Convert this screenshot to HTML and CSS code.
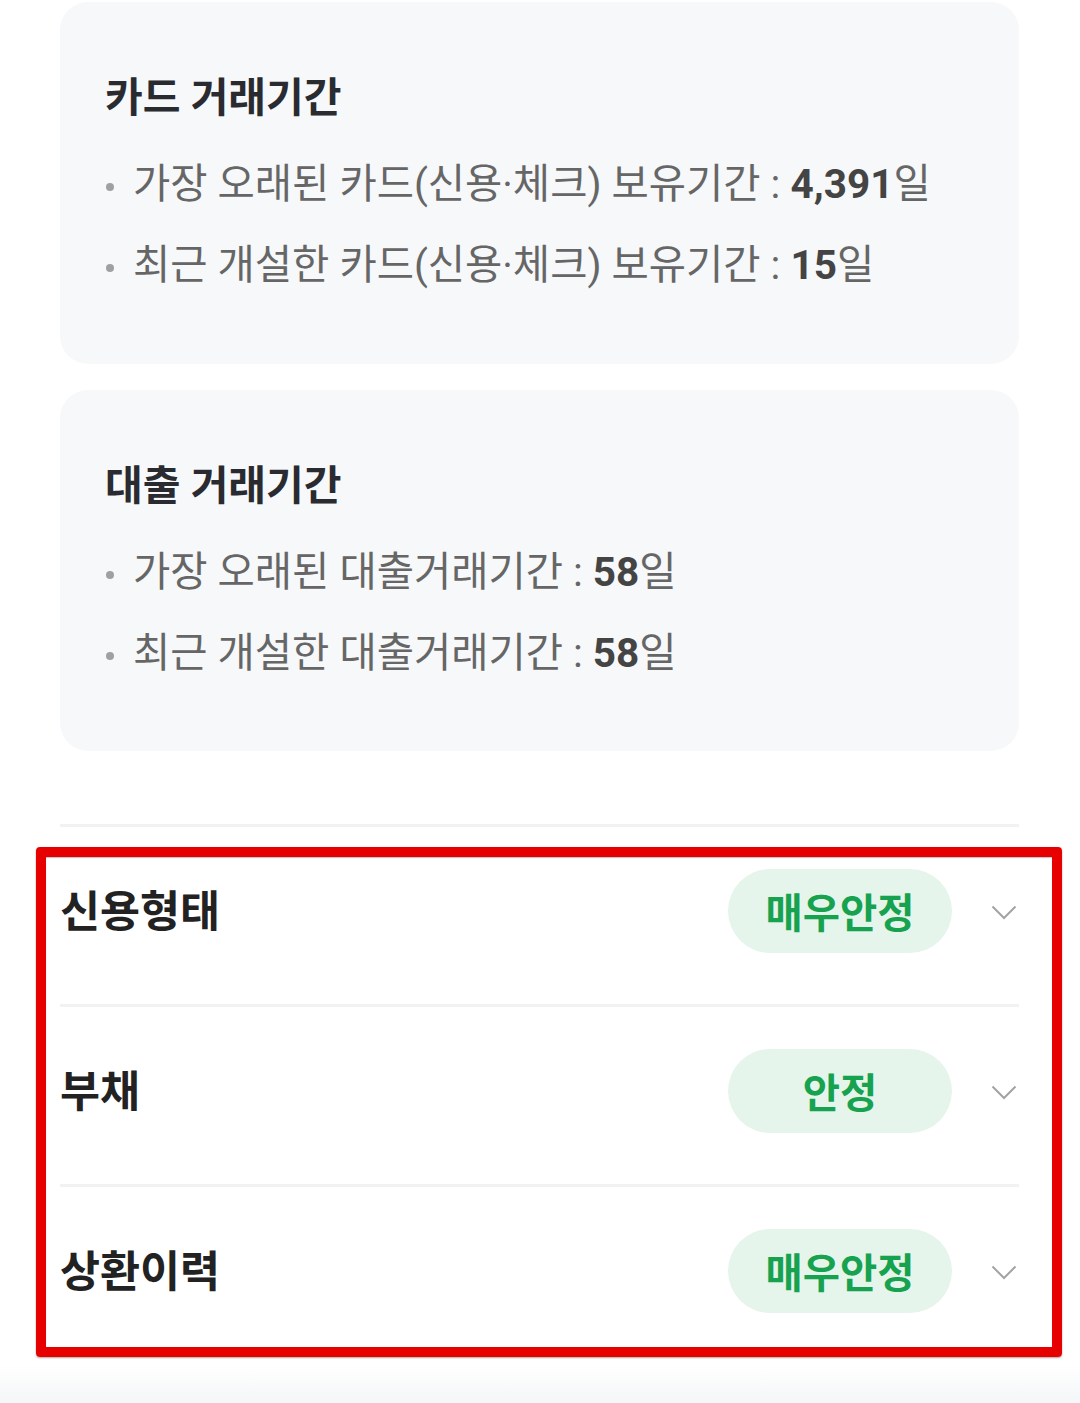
FILE: index.html
```html
<!DOCTYPE html>
<html lang="ko">
<head>
<meta charset="utf-8">
<title>신용 정보</title>
<link rel="stylesheet" href="styles.css">
</head>
<body>
<main class="page">
  <section class="card card-first">
    <h2 class="card-title">카드 거래기간</h2>
    <ul class="facts">
      <li class="fact"><span class="dot"></span><span class="fact-text">가장 오래된 카드(신용·체크) 보유기간 : <b class="val">4,391</b>일</span></li>
      <li class="fact"><span class="dot"></span><span class="fact-text">최근 개설한 카드(신용·체크) 보유기간 : <b class="val">15</b>일</span></li>
    </ul>
  </section>
  <section class="card card-second">
    <h2 class="card-title">대출 거래기간</h2>
    <ul class="facts">
      <li class="fact"><span class="dot"></span><span class="fact-text">가장 오래된 대출거래기간 : <b class="val">58</b>일</span></li>
      <li class="fact"><span class="dot"></span><span class="fact-text">최근 개설한 대출거래기간 : <b class="val">58</b>일</span></li>
    </ul>
  </section>

  <div class="divider"></div>

  <section class="summary">
    <div class="row">
      <span class="row-title">신용형태</span>
      <span class="row-right">
        <span class="badge">매우안정</span>
        <svg class="chev" width="26" height="15" viewBox="0 0 26 15"><polyline points="1.5,1.5 13,13 24.5,1.5" fill="none" stroke="#a3a3a3" stroke-width="2"/></svg>
      </span>
    </div>
    <div class="row">
      <span class="row-title">부채</span>
      <span class="row-right">
        <span class="badge">안정</span>
        <svg class="chev" width="26" height="15" viewBox="0 0 26 15"><polyline points="1.5,1.5 13,13 24.5,1.5" fill="none" stroke="#a3a3a3" stroke-width="2"/></svg>
      </span>
    </div>
    <div class="row row-last">
      <span class="row-title">상환이력</span>
      <span class="row-right">
        <span class="badge">매우안정</span>
        <svg class="chev" width="26" height="15" viewBox="0 0 26 15"><polyline points="1.5,1.5 13,13 24.5,1.5" fill="none" stroke="#a3a3a3" stroke-width="2"/></svg>
      </span>
    </div>
    <div class="highlight"></div>
  </section>
  <div class="bottom-fade"></div>
</main>
</body>
</html>
```
FILE: styles.css
```css
html, body {
  margin: 0;
  padding: 0;
  background: #ffffff;
  height: 1403px;
  overflow: hidden;
}
body {
  font-family: Roboto, "Noto Sans CJK KR", sans-serif;
  color: #222;
}
.page {
  padding: 2px 61px 0 60px;
  display: flex;
  flex-direction: column;
}
.card {
  background: #f6f8fa;
  border-radius: 28px;
  padding: 72px 45px 58px;
}
.card-second {
  margin-top: 26px;
  padding-bottom: 57px;
}
.card-title {
  margin: 0;
  font-size: 41px;
  line-height: 48px;
  font-weight: 700;
  color: #2a2b30;
}
.facts {
  list-style: none;
  margin: 22px 0 0;
  padding: 0;
}
.fact {
  display: flex;
  align-items: center;
  height: 81px;
  font-size: 40.5px;
  line-height: 81px;
  color: #666666;
  white-space: nowrap;
}
.dot {
  width: 8px;
  height: 8px;
  border-radius: 50%;
  background: #a0a0a0;
  margin: 4px 19px 0 1px;
  flex: none;
}
.val {
  font-weight: 700;
  color: #444444;
}
.divider {
  margin-top: 73px;
  height: 3px;
  background: #f2f2f2;
}
.summary {
  position: relative;
  display: flex;
  flex-direction: column;
}
.row {
  display: flex;
  align-items: center;
  justify-content: space-between;
  padding: 42px 2px 51px 0;
  border-bottom: 3px solid #f2f2f2;
}
.row-last {
  border-bottom: none;
}
.row-title {
  font-size: 43.5px;
  line-height: 50px;
  padding-top: 4px;
  font-weight: 700;
  color: #222222;
}
.row-right {
  display: flex;
  align-items: center;
  gap: 39px;
}
.badge {
  width: 224px;
  height: 84px;
  border-radius: 42px;
  background: #e5f5eb;
  color: #17a24f;
  font-size: 40.5px;
  font-weight: 700;
  display: flex;
  align-items: center;
  justify-content: center;
  padding-bottom: 2px;
  box-sizing: border-box;
}
.chev {
  display: block;
  margin-top: 2px;
}
.highlight {
  position: absolute;
  left: -24px;
  top: 20px;
  width: 1026px;
  height: 510px;
  box-sizing: border-box;
  border: 10px solid #e60000;
  border-radius: 4px;
  box-shadow: 0 1px 2px rgba(0, 0, 0, 0.35), inset 0 1px 1px rgba(0, 0, 0, 0.25);
  pointer-events: none;
}
.bottom-fade {
  margin: 1px -61px 0 -60px;
  height: 40px;
  background: linear-gradient(to bottom, #ffffff 0%, #f8f9fa 60%, #f5f6f7 100%);
}
```
